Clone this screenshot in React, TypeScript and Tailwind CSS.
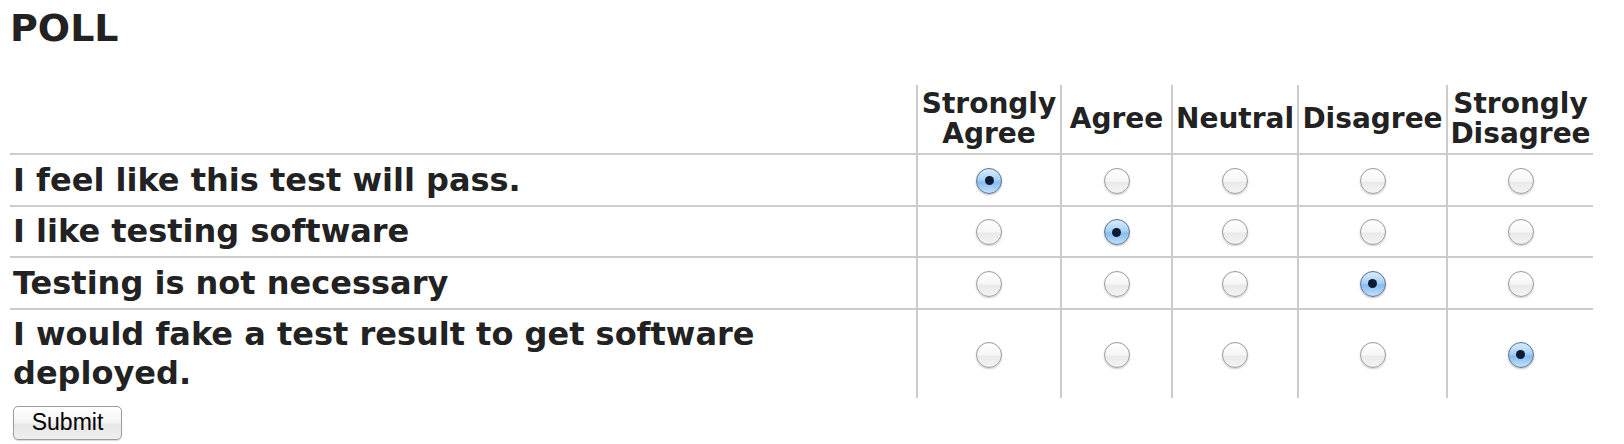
const options = ["Strongly Agree", "Agree", "Neutral", "Disagree", "Strongly Disagree"];

const questions = [
  { text: "I feel like this test will pass.", answer: 0 },
  { text: "I like testing software", answer: 1 },
  { text: "Testing is not necessary", answer: 3 },
  { text: "I would fake a test result to get software deployed.", answer: 4 },
];

const colWidths = ["w-[906px]", "w-[144px]", "w-[111px]", "w-[126px]", "w-[149px]", "w-[147px]"];

function Radio({ checked }: { checked: boolean }) {
  if (checked) {
    return (
      <span className="flex h-[26px] w-[26px] items-center justify-center rounded-full border border-[#5f6f8c] bg-[linear-gradient(to_bottom,#d9ecfd_0%,#a9d1f7_45%,#86bdf0_55%,#bfe0fc_100%)] shadow-[0_1px_2px_rgba(0,0,0,0.25)]">
        <span className="h-[9px] w-[9px] rounded-full bg-[#0d1b33]" />
      </span>
    );
  }
  return (
    <span className="flex h-[26px] w-[26px] rounded-full border border-[#9a9a9a] bg-[linear-gradient(to_bottom,#ffffff_0%,#f6f6f6_50%,#e9e9e9_55%,#f4f4f4_100%)] shadow-[0_1px_2px_rgba(0,0,0,0.2)]" />
  );
}

export default function App() {
  return (
    <div className="min-h-[444px] bg-white px-[10px] pt-[8.5px] text-[#222] [font-family:'DejaVu_Sans',Verdana,sans-serif]">
      <h1 className="text-[38px] font-bold leading-[38px]">POLL</h1>

      <table className="mt-[38.5px] w-[1583px] table-fixed border-separate border-spacing-0">
        <colgroup>
          {colWidths.map((w, i) => (
            <col key={i} className={w} />
          ))}
        </colgroup>
        <thead>
          <tr>
            <th />
            {options.map((opt) => (
              <th
                key={opt}
                className="border-l-2 border-[#cccccc] px-0 py-[4px] text-center align-middle text-[28px] font-bold leading-[30px]"
              >
                {opt.split(" ").map((word) => (
                  <div key={word}>{word}</div>
                ))}
              </th>
            ))}
          </tr>
        </thead>
        <tbody>
          {questions.map((q) => (
            <tr key={q.text}>
              <td className="border-t-2 border-[#cccccc] py-[5.5px] pl-[3px] pr-[4px] align-middle text-[32px] font-bold leading-[38.5px]">
                {q.text}
              </td>
              {options.map((opt, i) => (
                <td
                  key={opt}
                  className="border-l-2 border-t-2 border-[#cccccc] align-middle"
                >
                  <div className="flex justify-center pt-[2px]">
                    <Radio checked={q.answer === i} />
                  </div>
                </td>
              ))}
            </tr>
          ))}
        </tbody>
      </table>

      <button
        type="button"
        className="ml-[3px] mt-[8px] h-[34px] w-[109px] rounded-[5px] border border-[#9c9c9c] bg-[linear-gradient(to_bottom,#ffffff_0%,#f4f4f4_50%,#e6e6e6_55%,#efefef_100%)] text-[23px] leading-none text-black shadow-[0_1px_1px_rgba(0,0,0,0.15)] [font-family:'Liberation_Sans',Arial,sans-serif]"
      >
        Submit
      </button>
    </div>
  );
}
